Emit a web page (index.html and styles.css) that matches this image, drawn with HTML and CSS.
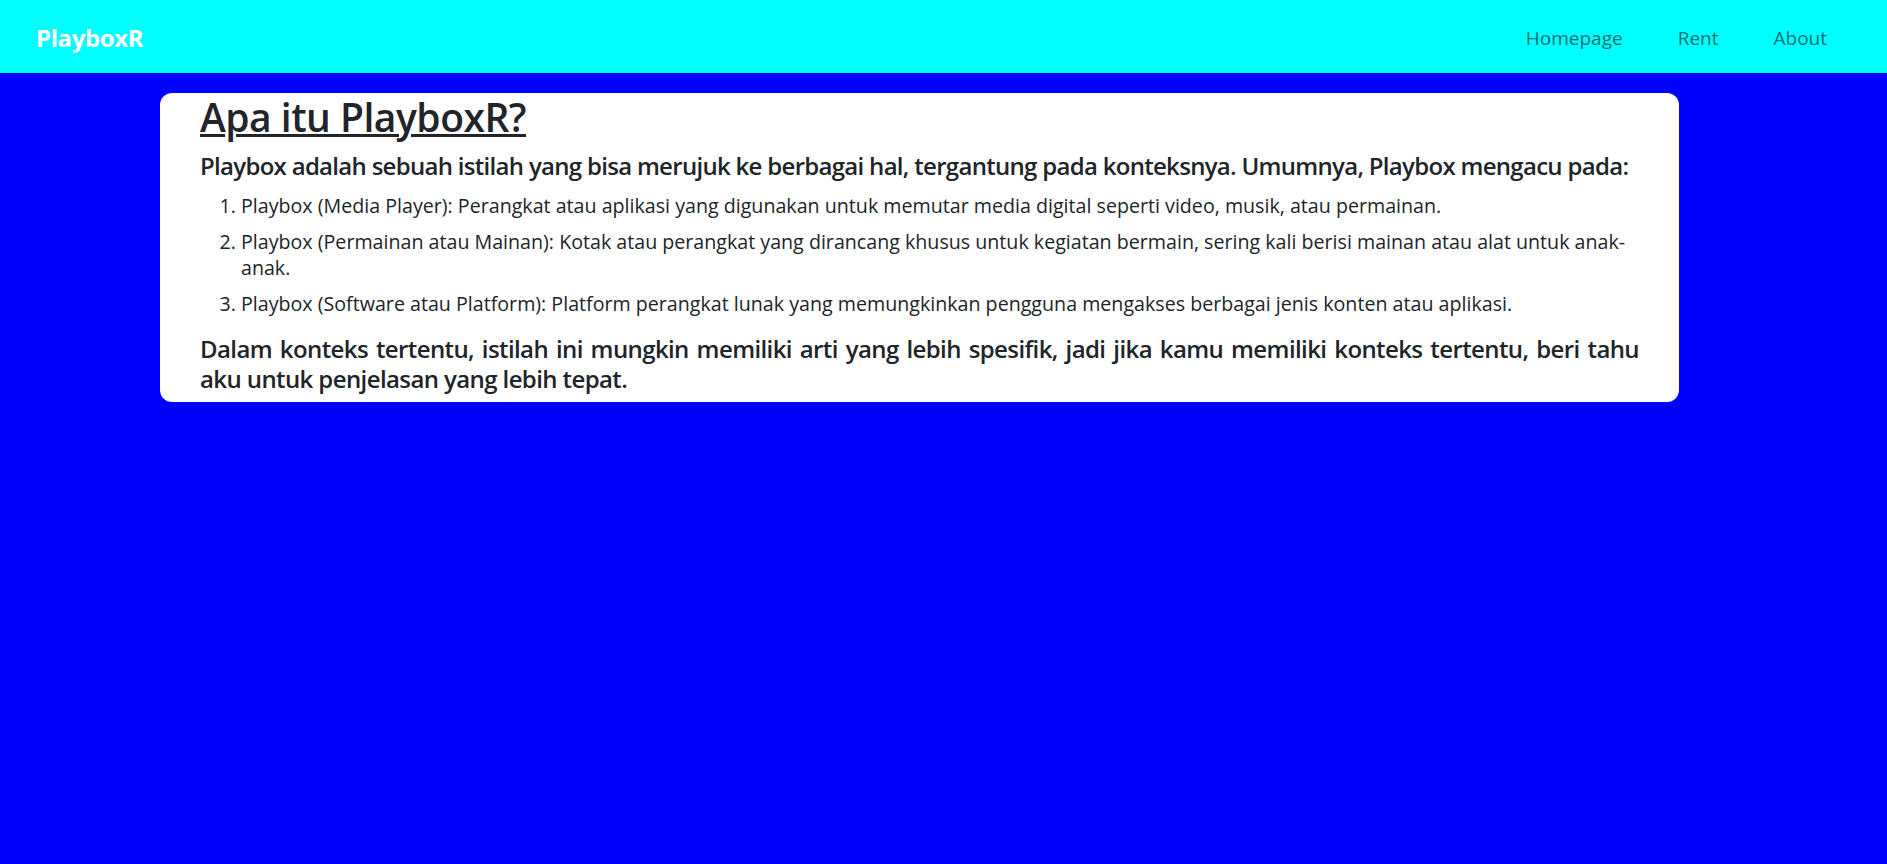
FILE: index.html
```html
<!DOCTYPE html>
<html lang="id">
<head>
<meta charset="utf-8">
<title>PlayboxR</title>
<link rel="stylesheet" href="styles.css">
</head>
<body>
<nav class="navbar">
  <a class="brand" href="#">PlayboxR</a>
  <ul class="nav-links">
    <li><a href="#">Homepage</a></li>
    <li><a href="#">Rent</a></li>
    <li><a href="#">About</a></li>
  </ul>
</nav>
<main class="card">
  <h2 class="title">Apa itu PlayboxR?</h2>
  <p class="lead-text">Playbox adalah sebuah istilah yang bisa merujuk ke berbagai hal, tergantung pada konteksnya. Umumnya, Playbox mengacu pada:</p>
  <ol class="items">
    <li>Playbox (Media Player): Perangkat atau aplikasi yang digunakan untuk memutar media digital seperti video, musik, atau permainan.</li>
    <li>Playbox (Permainan atau Mainan): Kotak atau perangkat yang dirancang khusus untuk kegiatan bermain, sering kali berisi mainan atau alat untuk anak-anak.</li>
    <li>Playbox (Software atau Platform): Platform perangkat lunak yang memungkinkan pengguna mengakses berbagai jenis konten atau aplikasi.</li>
  </ol>
  <p class="lead-text closing">Dalam konteks tertentu, istilah ini mungkin memiliki arti yang lebih spesifik, jadi jika kamu memiliki konteks tertentu, beri tahu aku untuk penjelasan yang lebih tepat.</p>
</main>
</body>
</html>
```
FILE: styles.css
```css
* { box-sizing: border-box; }

html, body {
  margin: 0;
  padding: 0;
  background: #0000ff;
  min-height: 100%;
}

body {
  font-family: "Open Sans", "Noto Sans", sans-serif;
  color: #212529;
}

.navbar {
  height: 73px;
  background: #00ffff;
  display: flex;
  align-items: center;
  justify-content: space-between;
  padding: 2px 60px 0 36px;
}

.brand {
  color: #ffffff;
  font-weight: 700;
  font-size: 24px;
  letter-spacing: -0.4px;
  text-decoration: none;
  line-height: 30px;
}

.nav-links {
  list-style: none;
  margin: 0;
  padding: 0;
  display: flex;
  gap: 55px;
}

.nav-links a {
  color: #007373;
  font-size: 19px;
  text-decoration: none;
  line-height: 28px;
}

.card {
  display: block;
  width: 1519px;
  margin: 20px 0 0 160px;
  background: #ffffff;
  border-radius: 12px;
  padding: 0 40px 8px 40px;
}

.title {
  margin: 0 0 10px 0;
  font-size: 39px;
  font-weight: 600;
  letter-spacing: -0.5px;
  line-height: 48px;
  text-decoration: underline;
  text-decoration-thickness: 3px;
}

.lead-text {
  margin: 0 0 12px 0;
  font-size: 24px;
  font-weight: 600;
  letter-spacing: -0.7px;
  line-height: 30px;
  text-align: justify;
}

.items {
  margin: 0 0 17px 0;
  padding-left: 41px;
  font-size: 19.65px;
  line-height: 26px;
}

.items li {
  margin-bottom: 10px;
}

.items li:last-child {
  margin-bottom: 0;
}

.closing {
  margin-bottom: 0;
  letter-spacing: -0.6px;
}
```
